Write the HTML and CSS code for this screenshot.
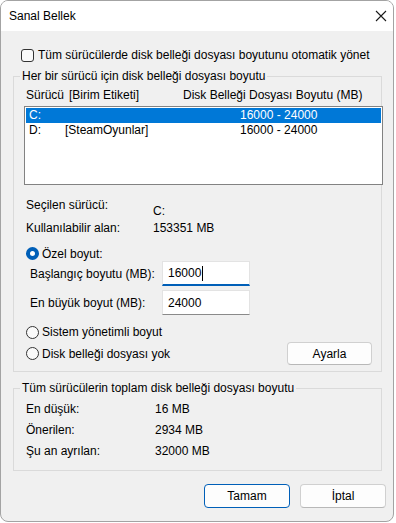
FILE: index.html
```html
<!DOCTYPE html>
<html lang="tr">

<head>
    <meta charset="UTF-8">
    <title>Sanal Bellek</title>
    <link rel="stylesheet" href="styles.css">
</head>

<body>
    <div class="window">
        <!-- Title bar -->
        <div class="titlebar">
            <span class="title">Sanal Bellek</span>
            <svg class="close" width="12" height="12" viewBox="0 0 12 12">
                <path d="M1 1 L11 11 M11 1 L1 11" stroke="#1a1a1a" stroke-width="1.1" fill="none" />
            </svg>
        </div>

        <div class="content">
            <label class="check-row">
                <span class="checkbox"></span>
                <span>Tüm sürücülerde disk belleği dosyası boyutunu otomatik yönet</span>
            </label>

            <!-- Per drive group -->
            <fieldset class="group group-drives">
                <legend>Her bir sürücü için disk belleği dosyası boyutu</legend>
                <div class="group-inner">
                    <div class="list-header">
                        <span>Sürücü</span>
                        <span>[Birim Etiketi]</span>
                        <span>Disk Belleği Dosyası Boyutu (MB)</span>
                    </div>
                    <div class="listbox">
                        <div class="list-row selected">
                            <span>C:</span>
                            <span></span>
                            <span>16000 - 24000</span>
                        </div>
                        <div class="list-row">
                            <span>D:</span>
                            <span>[SteamOyunlar]</span>
                            <span>16000 - 24000</span>
                        </div>
                    </div>

                    <div class="info-row selected-drive">
                        <span class="label">Seçilen sürücü:</span>
                        <span class="value">C:</span>
                    </div>
                    <div class="info-row">
                        <span class="label">Kullanılabilir alan:</span>
                        <span class="value">153351 MB</span>
                    </div>

                    <div class="radio-row custom">
                        <span class="radio checked"></span>
                        <span>Özel boyut:</span>
                    </div>
                    <div class="size-row">
                        <span class="size-label">Başlangıç boyutu (MB):</span>
                        <div class="textbox focused">16000<span class="caret"></span></div>
                    </div>
                    <div class="size-row second">
                        <span class="size-label">En büyük boyut (MB):</span>
                        <div class="textbox">24000</div>
                    </div>

                    <div class="radio-row system">
                        <span class="radio"></span>
                        <span>Sistem yönetimli boyut</span>
                    </div>
                    <div class="radio-row none">
                        <span class="radio"></span>
                        <span class="grow">Disk belleği dosyası yok</span>
                        <button class="btn set-btn">Ayarla</button>
                    </div>
                </div>
            </fieldset>

            <!-- Totals group -->
            <fieldset class="group group-total">
                <legend>Tüm sürücülerin toplam disk belleği dosyası boyutu</legend>
                <div class="group-inner">
                    <div class="info-row">
                        <span class="label">En düşük:</span>
                        <span class="value">16 MB</span>
                    </div>
                    <div class="info-row">
                        <span class="label">Önerilen:</span>
                        <span class="value">2934 MB</span>
                    </div>
                    <div class="info-row">
                        <span class="label">Şu an ayrılan:</span>
                        <span class="value">32000 MB</span>
                    </div>
                </div>
            </fieldset>

            <div class="dialog-buttons">
                <button class="btn default">Tamam</button>
                <button class="btn">İptal</button>
            </div>
        </div>
    </div>
</body>

</html>
```

FILE: styles.css
```css
body {
    margin: 0;
    background: #ffffff;
    font-family: "Liberation Sans", Arial, sans-serif;
    font-size: 12px;
    color: #000;
}

.window {
    width: 394px;
    height: 522px;
    box-sizing: border-box;
    border: 1px solid #a3a3a3;
    border-radius: 8px;
    overflow: hidden;
    background: #f0f0f0;
    display: flex;
    flex-direction: column;
}

.titlebar {
    height: 30px;
    flex: none;
    background: #ffffff;
    display: flex;
    align-items: center;
    justify-content: space-between;
    padding: 0 6px 0 8px;
}

.title {
    font-size: 12px;
}

.close {
    display: block;
}

.content {
    padding: 0 11px 0 12px;
    display: flex;
    flex-direction: column;
}

/* Checkbox row */
.check-row {
    display: flex;
    align-items: center;
    height: 16px;
    margin-top: 16px;
    padding-left: 8px;
}

.checkbox {
    width: 11px;
    height: 11px;
    border: 1px solid #333;
    border-radius: 3px;
    background: #fafafa;
    margin-right: 4px;
}

/* Group boxes */
.group {
    margin: 5px 0 0 0;
    padding: 0;
    border: 1px solid #dadada;
    border-radius: 0;
    min-width: 0;
}

.group legend {
    padding: 0 2px;
    margin-left: 6px;
    line-height: 16px;
}

.group-inner {
    padding: 0 0 6px 10px;
    display: flex;
    flex-direction: column;
}

.list-header {
    display: grid;
    grid-template-columns: 43px 114px auto;
    height: 16px;
    line-height: 16px;
    margin-top: 3px;
    padding-left: 2px;
}

.listbox {
    width: 359px;
    height: 79px;
    box-sizing: border-box;
    margin-top: 3px;
    border: 1px solid #828282;
    background: #ffffff;
    padding: 1px;
}

.list-row {
    display: grid;
    grid-template-columns: 36px 175px auto;
    height: 15px;
    line-height: 15px;
    padding-left: 3px;
}

.list-row.selected {
    background: #0078d7;
    color: #ffffff;
}

.info-row {
    display: flex;
    height: 16px;
    line-height: 16px;
    padding-left: 2px;
}

.info-row .label {
    width: 127px;
}

.selected-drive {
    margin-top: 12px;
    height: 22px;
}

.selected-drive .value {
    padding-top: 6px;
}

.selected-drive + .info-row {
    margin-top: 1px;
}

/* Radio buttons */
.radio-row {
    display: flex;
    align-items: center;
    height: 16px;
    padding-left: 2px;
}

.radio {
    width: 11px;
    height: 11px;
    border: 1px solid #333;
    border-radius: 50%;
    background: #fafafa;
    margin-right: 3px;
    box-sizing: content-box;
}

.radio.checked {
    width: 5px;
    height: 5px;
    border: 4px solid #005fb8;
    background: #ffffff;
}

.radio-row.custom {
    margin-top: 10px;
    height: 15px;
}

.radio-row.system {
    margin-top: 9px;
}

.radio-row.none {
    margin-top: 2px;
    height: 23px;
}

.grow {
    flex: 1;
}

/* Size inputs */
.size-row {
    display: flex;
    align-items: center;
    height: 25px;
}

.size-row.second {
    margin-top: 4px;
}

.size-label {
    width: 132px;
    padding-left: 6px;
}

.textbox {
    width: 88px;
    height: 25px;
    box-sizing: border-box;
    background: #ffffff;
    border: 1px solid #e3e3e3;
    border-bottom-color: #8a8a8a;
    padding-left: 5px;
    line-height: 22px;
    display: flex;
    align-items: center;
}

.textbox.focused {
    border-bottom: 2px solid #005fb8;
}

.caret {
    width: 1px;
    height: 15px;
    background: #000;
    margin-left: 1px;
}

/* Buttons */
.btn {
    font-family: inherit;
    font-size: 12px;
    color: #000;
    background: #fdfdfd;
    border: 1px solid #d0d0d0;
    border-bottom-color: #b8b8b8;
    border-radius: 4px;
    padding: 0;
}

.set-btn {
    width: 85px;
    height: 23px;
    margin-right: 9px;
}

.group-total {
    margin-top: 8px;
}

.group-total .group-inner {
    padding-bottom: 11px;
}

.group-total .info-row {
    margin-top: 5px;
}

.group-total .info-row .label {
    width: 129px;
}

.dialog-buttons {
    display: flex;
    justify-content: flex-end;
    gap: 10px;
    margin-top: 13px;
    margin-right: -4px;
}

.dialog-buttons .btn {
    width: 86px;
    height: 24px;
}

.btn.default {
    border: 1px solid #005fb8;
}
```
